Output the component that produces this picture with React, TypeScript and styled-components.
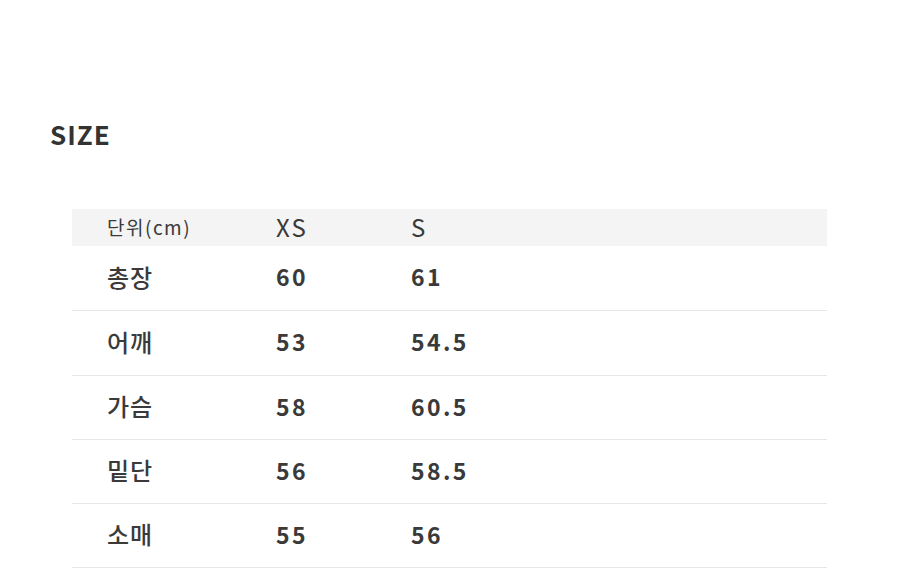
import React from 'react';
import styled, {createGlobalStyle} from 'styled-components';

const GlobalStyle = createGlobalStyle`
    html, body {
        margin:0;
        padding:0;
        background:#fff;
    }
    body {
        font-family:"Noto Sans CJK KR", "Noto Sans", sans-serif;
        color:#383838;
    }
`

const Page = styled.div`
    width:900px;
    height:571px;
    overflow:hidden;
    padding-top:115px;
    box-sizing:border-box;
`

const Title = styled.h2`
    margin:0 0 0 50px;
    height:38px;
    line-height:38px;
    font-size:26px;
    font-weight:700;
    letter-spacing:1px;
    color:#333;
`

const Table = styled.div`
    margin:56px 0 0 72px;
    width:755px;
`

const Row = styled.div<{head?:boolean}>`
    display:grid;
    grid-template-columns:169px 135px 1fr;
    align-items:center;
    padding-left:35px;
    height:${({head}) => head ? '37px' : '63px'};
    background:${({head}) => head ? '#f4f4f4' : 'transparent'};
    border-bottom:${({head}) => head ? 'none' : '1px solid #e6e6e6'};
    &:nth-child(2), &:nth-child(3) {
        height:64px;
    }
`

const HeadCell = styled.span<{unit?:boolean}>`
    font-size:${({unit}) => unit ? '19px' : '24px'};
    font-weight:400;
    letter-spacing:${({unit}) => unit ? '1.5px' : '2px'};
    line-height:1;
    color:#3a3a3a;
    margin-top:-2px;
`

const LabelCell = styled.span`
    font-size:24px;
    font-weight:500;
    letter-spacing:1px;
    line-height:1;
    color:#3a3a3a;
    margin-top:-3px;
`

const ValueCell = styled.span`
    font-size:23px;
    font-weight:700;
    letter-spacing:2.4px;
    line-height:1;
    color:#3a3a3a;
    margin-top:-3px;
`

const rows = [
    ['총장', '60', '61'],
    ['어깨', '53', '54.5'],
    ['가슴', '58', '60.5'],
    ['밑단', '56', '58.5'],
    ['소매', '55', '56'],
]

const App = () => {
    return (
        <Page>
            <GlobalStyle/>
            <Title>SIZE</Title>
            <Table>
                <Row head>
                    <HeadCell unit>단위(cm)</HeadCell>
                    <HeadCell>XS</HeadCell>
                    <HeadCell>S</HeadCell>
                </Row>
                {rows.map(([label, xs, s]) => (
                    <Row key={label}>
                        <LabelCell>{label}</LabelCell>
                        <ValueCell>{xs}</ValueCell>
                        <ValueCell>{s}</ValueCell>
                    </Row>
                ))}
            </Table>
        </Page>
    )
}

export default App;
